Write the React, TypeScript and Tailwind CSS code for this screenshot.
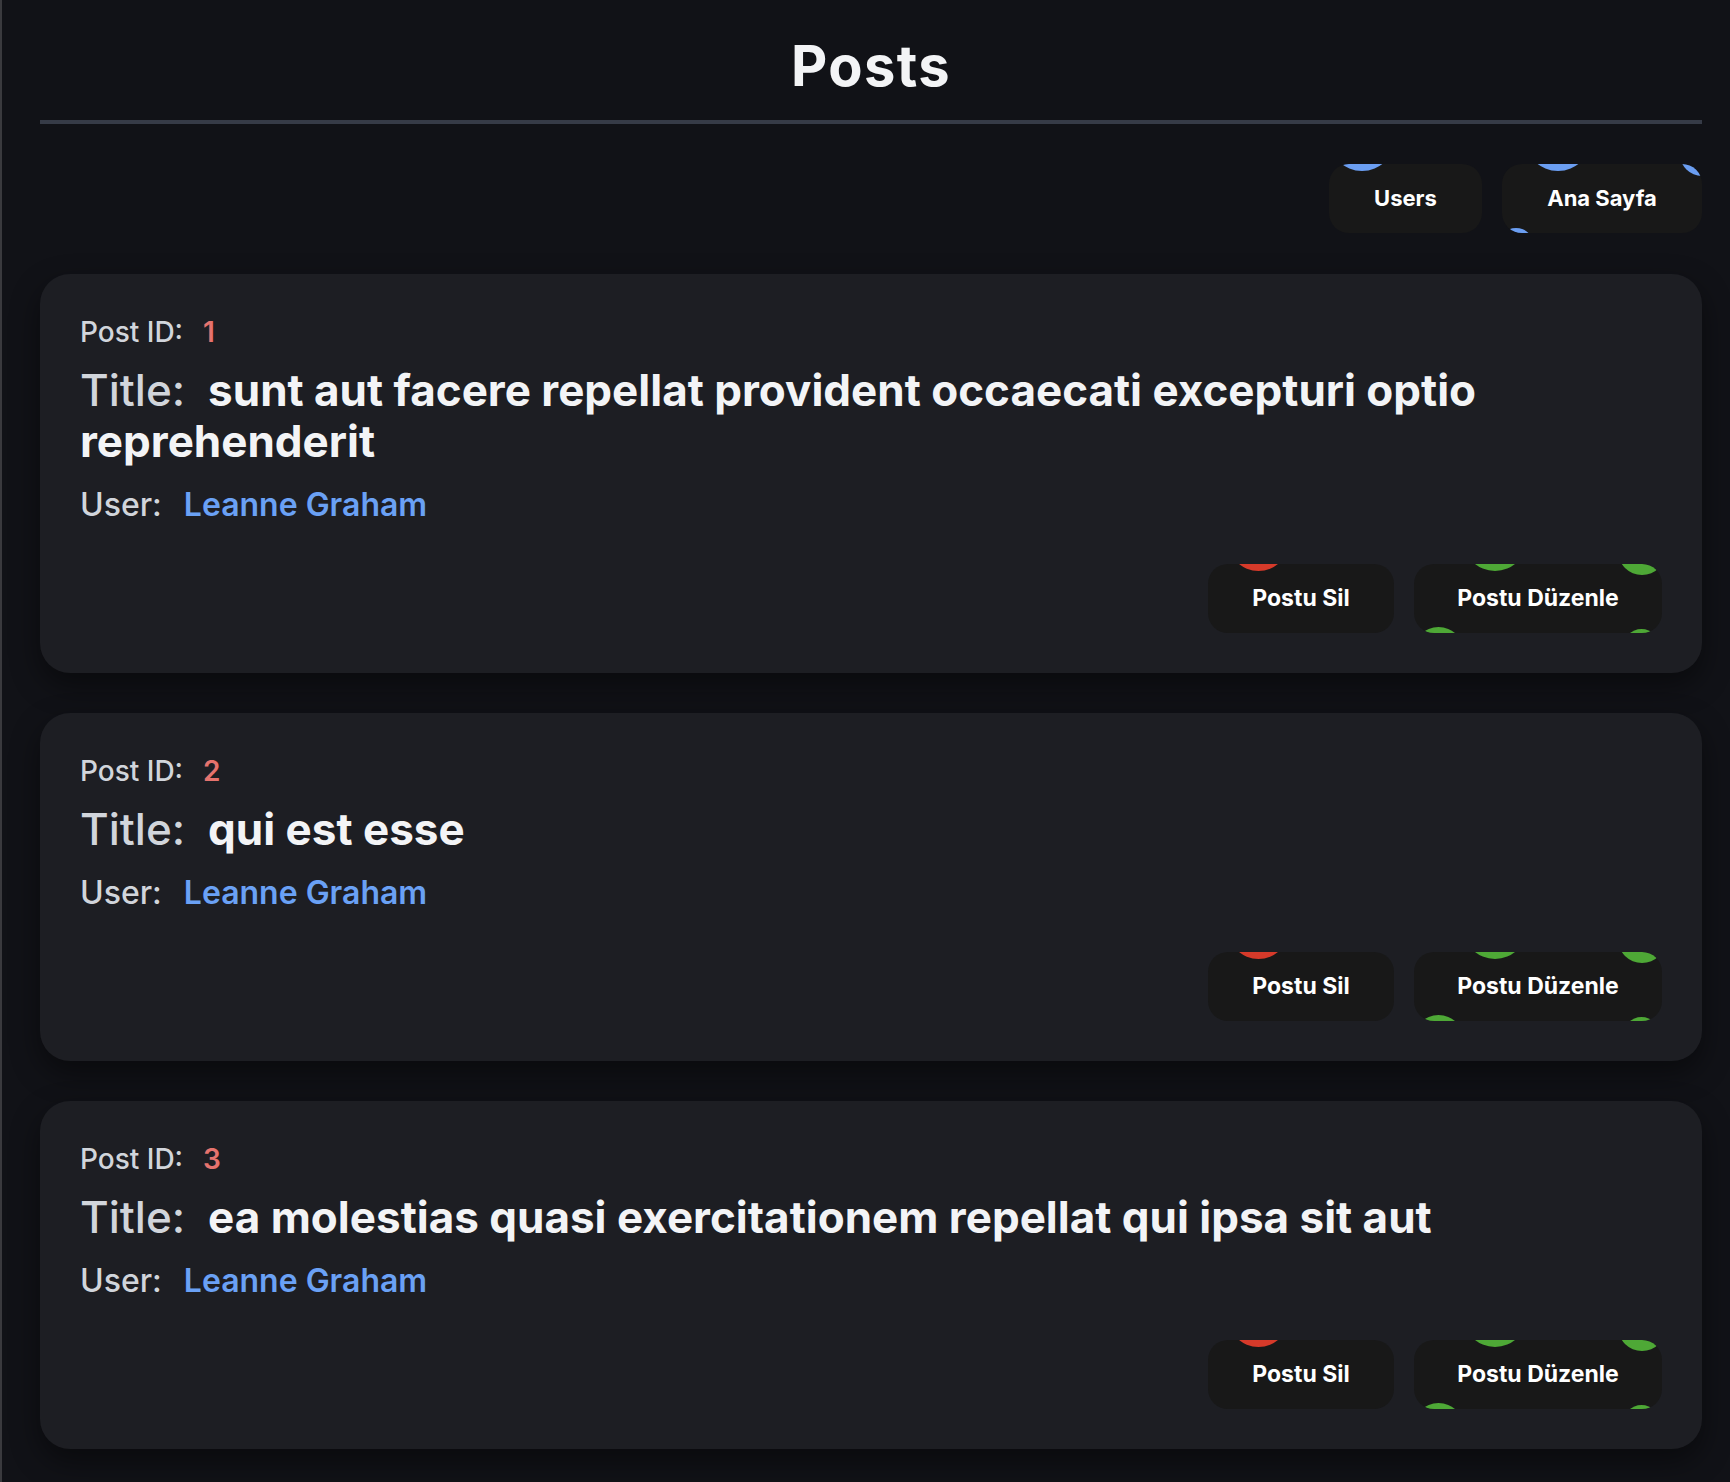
type Blob = { cls: string }

type Post = { id: number; title: string; user: string }

const posts: Post[] = [
  { id: 1, title: 'sunt aut facere repellat provident occaecati excepturi optio reprehenderit', user: 'Leanne Graham' },
  { id: 2, title: 'qui est esse', user: 'Leanne Graham' },
  { id: 3, title: 'ea molestias quasi exercitationem repellat qui ipsa sit aut', user: 'Leanne Graham' },
]

const usersBlobs: Blob[] = [{ cls: 'left-0 -top-[59px] w-[66px] h-[66px] bg-[#6b9ef2]' }]

const homeBlobs: Blob[] = [
  { cls: 'left-[23px] -top-[59px] w-[66px] h-[66px] bg-[#6b9ef2]' },
  { cls: 'left-[178px] -top-[32px] w-[44px] h-[44px] bg-[#6b9ef2]' },
  { cls: '-left-[4px] top-[64px] w-[36px] h-[36px] bg-[#6b9ef2]' },
]

const deleteBlobs: Blob[] = [{ cls: 'left-[20px] -top-[54px] w-[61px] h-[61px] bg-[#d63a2a]' }]

const editBlobs: Blob[] = [
  { cls: 'left-[49px] -top-[57px] w-[64px] h-[64px] bg-[#4ea836]' },
  { cls: 'left-[204px] -top-[37px] w-[48px] h-[48px] bg-[#4ea836]' },
  { cls: '-left-[1px] top-[63px] w-[51px] h-[51px] bg-[#4ea836]' },
  { cls: 'left-[209px] top-[65px] w-[37px] h-[37px] bg-[#4ea836]' },
]

function BubbleButton({ label, blobs, size }: { label: string; blobs: Blob[]; size: string }) {
  return (
    <button
      className={`relative overflow-hidden rounded-[20px] bg-[#181818] text-white font-bold flex items-center justify-center ${size}`}
    >
      {blobs.map((b, i) => (
        <span key={i} className={`absolute rounded-full ${b.cls}`} />
      ))}
      <span className="relative">{label}</span>
    </button>
  )
}

function PostCard({ post }: { post: Post }) {
  return (
    <div className="rounded-[30px] bg-[#1d1e23] p-10 shadow-[0_12px_30px_rgba(0,0,0,0.45)]">
      <div className="text-[28px] leading-[36px] font-medium text-[#d1d5db]">
        Post ID:<span className="ml-[20px] font-semibold text-[#e5736e]">{post.id}</span>
      </div>
      <div className="mt-[15px] text-[44px] leading-[51px] font-medium text-[#d1d5db]">
        Title:<span className="ml-[23px] font-bold text-[#f3f4f6]">{post.title}</span>
      </div>
      <div className="mt-[20px] text-[32px] leading-[36px] font-medium text-[#d1d5db]">
        User:<span className="ml-[22px] font-semibold text-[#6aa1f5]">{post.user}</span>
      </div>
      <div className="mt-[41px] flex justify-end gap-5">
        <BubbleButton label="Postu Sil" blobs={deleteBlobs} size="w-[186px] h-[69px] text-[23px]" />
        <BubbleButton label="Postu Düzenle" blobs={editBlobs} size="w-[248px] h-[69px] text-[23px]" />
      </div>
    </div>
  )
}

export default function App() {
  return (
    <div className="min-h-screen bg-[#111217] border-l-2 border-[#3a3a3e] font-['Inter','Noto_Sans',sans-serif]">
      <div className="pl-[38px] pr-[28px] pb-[34px]">
        <header className="pt-[38px] pb-[26px] border-b-4 border-[#363b47]">
          <h1 className="text-center text-[56px] leading-[56px] font-bold tracking-wide text-[#f3f4f6]">Posts</h1>
        </header>
        <nav className="mt-10 flex justify-end gap-5">
          <BubbleButton label="Users" blobs={usersBlobs} size="w-[153px] h-[69px] text-[22px]" />
          <BubbleButton label="Ana Sayfa" blobs={homeBlobs} size="w-[200px] h-[69px] text-[22px]" />
        </nav>
        <main className="mt-[41px] flex flex-col gap-10">
          {posts.map((p) => (
            <PostCard key={p.id} post={p} />
          ))}
        </main>
      </div>
    </div>
  )
}
